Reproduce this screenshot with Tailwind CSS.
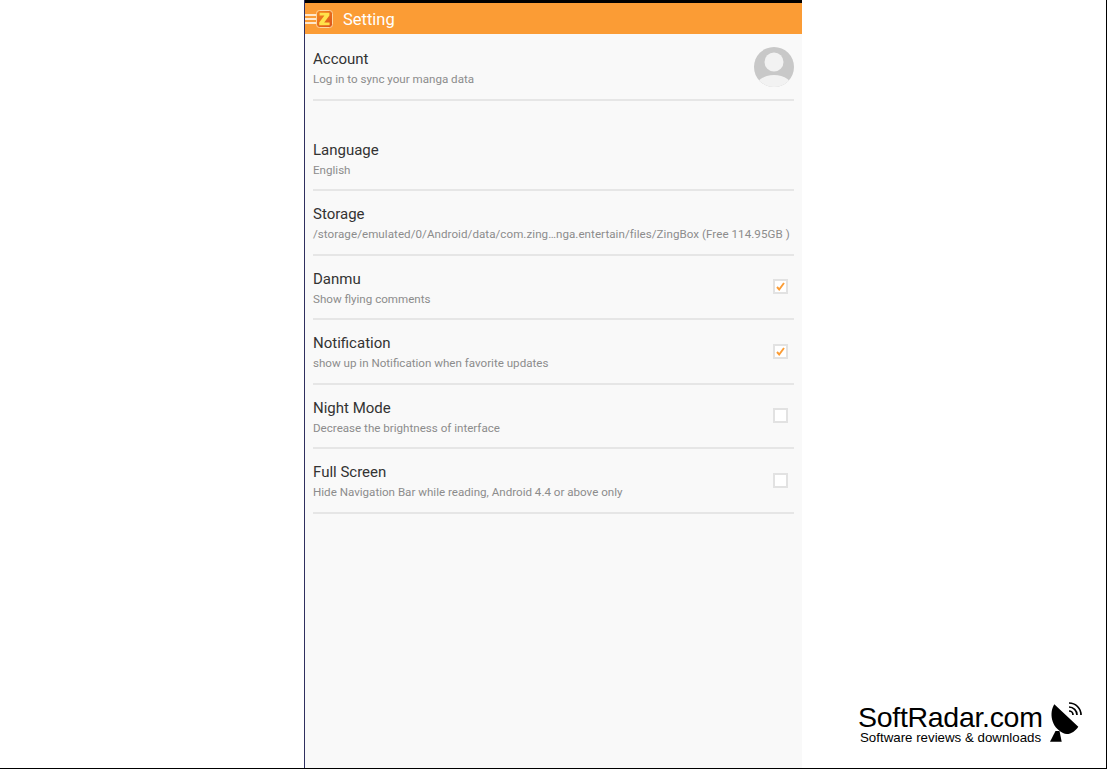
<!DOCTYPE html>
<html lang="en">
<head>
<meta charset="utf-8">
<script src="https://cdn.jsdelivr.net/npm/@tailwindcss/browser@4"></script>
</head>
<body class="bg-white">
<div class="w-[1107px] h-[769px] flex overflow-hidden bg-white border-r border-b border-black font-['Roboto',sans-serif]">
  <div class="w-[304px] shrink-0"></div>
  <div class="w-[498px] shrink-0 flex flex-col bg-[#f9f9f9] border-l border-[#2f2f5f]">
    <div class="h-[3px] bg-black"></div>
    <div class="h-[31px] bg-[#fb9c35] flex items-center text-white">
      <svg class="w-[11px] h-[10px] shrink-0" viewBox="0 0 11 10"><path d="M0 1h11M0 5h11M0 9h11" stroke="#fff" stroke-width="1.6"/></svg>
      <svg class="w-[17px] h-[18px] shrink-0" viewBox="0 0 17 18"><defs><linearGradient id="z" x1="0" y1="0" x2="1" y2="1"><stop offset="0" stop-color="#f58a1f"/><stop offset="1" stop-color="#d9501a"/></linearGradient></defs><rect x=".5" y=".5" width="16" height="17" rx="3" fill="url(#z)" stroke="#fcd6a0"/><path d="M3.6 2.8h9.8v2.6L8.2 12.6h5.4v2.6H3.2v-2.6L8.4 5.4H3.6z" fill="#ffe24a"/></svg>
      <span class="ml-[10px] mt-[3px] text-[16.5px] leading-none">Setting</span>
    </div>
    <div class="h-[67px] mx-[8px] border-b-2 border-[#e6e6e6] flex items-center justify-between">
      <div class="pt-[1px]">
        <div class="text-[15px] leading-[20px] text-[#333]">Account</div>
        <div class="text-[11.6px] leading-[14px] mt-[3px] text-[#8c8c8c]">Log in to sync your manga data</div>
      </div>
      <svg class="w-[40px] h-[40px] shrink-0" viewBox="0 0 40 40"><defs><clipPath id="c"><circle cx="20" cy="20" r="20"/></clipPath></defs><circle cx="20" cy="20" r="20" fill="#c8c8c8"/><g clip-path="url(#c)"><ellipse cx="20" cy="42" rx="19" ry="14" fill="#f2f2f2"/></g><circle cx="20" cy="15" r="9.5" fill="#f2f2f2"/></svg>
    </div>
    <div class="h-[25px]"></div>
    <div class="h-[65px] mx-[8px] border-b-2 border-[#e6e6e6] flex items-center justify-between">
      <div class="pt-[1px]">
        <div class="text-[15px] leading-[20px] text-[#333]">Language</div>
        <div class="text-[11.6px] leading-[14px] mt-[3px] text-[#8c8c8c]">English</div>
      </div>
    </div>
    <div class="h-[64.5px] mx-[8px] border-b-2 border-[#e6e6e6] flex items-center justify-between">
      <div class="pt-[1px]">
        <div class="text-[15px] leading-[20px] text-[#333]">Storage</div>
        <div class="text-[11.6px] leading-[14px] mt-[3px] text-[#8c8c8c] whitespace-nowrap tracking-[0.05px]">/storage/emulated/0/Android/data/com.zing…nga.entertain/files/ZingBox (Free 114.95GB )</div>
      </div>
    </div>
    <div class="h-[64.5px] mx-[8px] border-b-2 border-[#e6e6e6] flex items-center justify-between">
      <div class="pt-[1px]">
        <div class="text-[15px] leading-[20px] text-[#333]">Danmu</div>
        <div class="text-[11.6px] leading-[14px] mt-[3px] text-[#8c8c8c]">Show flying comments</div>
      </div>
      <div class="w-[15px] h-[15px] mr-[6px] bg-white border-2 border-[#e2e2e2] flex items-center justify-center">
        <svg class="w-[9px] h-[9px]" viewBox="0 0 9 9"><path d="M1 5l2.2 2.5L8 1" fill="none" stroke="#fb9c35" stroke-width="1.9"/></svg>
      </div>
    </div>
    <div class="h-[64.5px] mx-[8px] border-b-2 border-[#e6e6e6] flex items-center justify-between">
      <div class="pt-[1px]">
        <div class="text-[15px] leading-[20px] text-[#333]">Notification</div>
        <div class="text-[11.6px] leading-[14px] mt-[3px] text-[#8c8c8c]">show up in Notification when favorite updates</div>
      </div>
      <div class="w-[15px] h-[15px] mr-[6px] bg-white border-2 border-[#e2e2e2] flex items-center justify-center">
        <svg class="w-[9px] h-[9px]" viewBox="0 0 9 9"><path d="M1 5l2.2 2.5L8 1" fill="none" stroke="#fb9c35" stroke-width="1.9"/></svg>
      </div>
    </div>
    <div class="h-[64.5px] mx-[8px] border-b-2 border-[#e6e6e6] flex items-center justify-between">
      <div class="pt-[1px]">
        <div class="text-[15px] leading-[20px] text-[#333]">Night Mode</div>
        <div class="text-[11.6px] leading-[14px] mt-[3px] text-[#8c8c8c]">Decrease the brightness of interface</div>
      </div>
      <div class="w-[15px] h-[15px] mr-[6px] bg-white border-2 border-[#e2e2e2]"></div>
    </div>
    <div class="h-[64.5px] mx-[8px] border-b-2 border-[#e6e6e6] flex items-center justify-between">
      <div class="pt-[1px]">
        <div class="text-[15px] leading-[20px] text-[#333]">Full Screen</div>
        <div class="text-[11.6px] leading-[14px] mt-[3px] text-[#8c8c8c]">Hide Navigation Bar while reading, Android 4.4 or above only</div>
      </div>
      <div class="w-[15px] h-[15px] mr-[6px] bg-white border-2 border-[#e2e2e2]"></div>
    </div>
  </div>
  <div class="flex-1 flex flex-col justify-end items-start pl-[56px] pb-[23px]">
    <div class="flex items-start">
      <div class="font-['Liberation_Sans',sans-serif] text-black">
        <div class="text-[28.5px] leading-[26px] tracking-[-0.3px] whitespace-nowrap">SoftRadar.com</div>
        <div class="text-[13.3px] leading-[15px] ml-[2px] whitespace-nowrap">Software reviews &amp; downloads</div>
      </div>
      <svg class="w-[36px] h-[42px] ml-[7px] -mt-[1px] shrink-0 overflow-visible" viewBox="0 0 36 42">
        <path d="M4.3 1.3C-1 10 1 24 13 30c5 3 12-1 15.3-6.3z" fill="#000"/>
        <path d="M0 38.7h11.7L9.5 28H5.5z" fill="#000"/>
        <path d="M19 8a4 4 0 0 1 4 4M19 4a8 8 0 0 1 8 8M19 0a12 12 0 0 1 12 12" fill="none" stroke="#000" stroke-width="1.7"/>
      </svg>
    </div>
  </div>
</div>
</body>
</html>
